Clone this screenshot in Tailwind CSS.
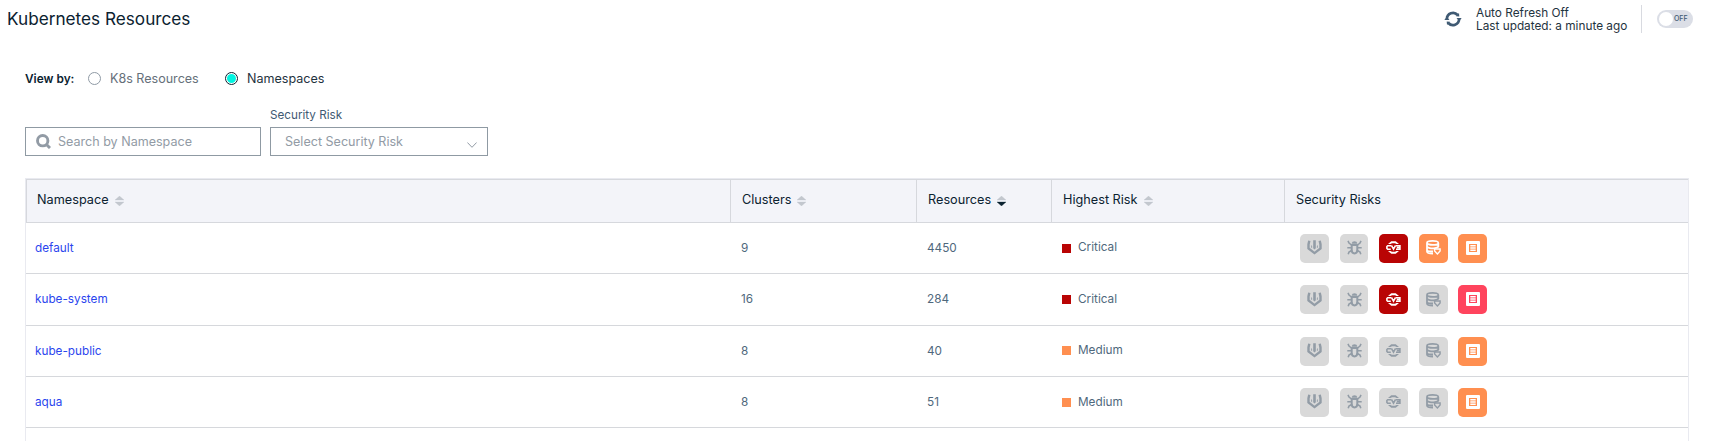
<!DOCTYPE html>
<html lang="en">
<head>
<meta charset="utf-8">
<title>Kubernetes Resources</title>
<script src="https://cdn.jsdelivr.net/npm/@tailwindcss/browser@4"></script>
</head>
<body class="h-[441px] overflow-hidden bg-white font-['Inter',sans-serif] text-[#0b2230]">
<svg class="hidden">
  <symbol id="malware" viewBox="0 0 15 15"><path d="M2.300.800L1.500 4.500v4l6 4.600 6-4.600v-4L12.700.800" fill="none" stroke="currentColor" stroke-width="2.400"/><path d="M6.200.3h2.600v8L7.500 9.500 6.200 8.300zM4.200 5l.9 1v2.200l-.9-.7zM10.800 5l-.9 1v2.200l.9-.7z" fill="currentColor"/></symbol>
  <symbol id="bug" viewBox="0 0 15 15"><path d="M4.700 3.700C4.700.4 10.300.4 10.300 3.700z" fill="currentColor"/><path d="M4.700 5h5.600v4.800c0 4.800-5.600 4.800-5.600 0z" fill="none" stroke="currentColor" stroke-width="2"/><path d="M1 .8l1 2.200 2.500 2M14 .8l-1 2.200-2.500 2M.3 7.700h4M14.700 7.700h-4M1.200 14.200l.8-2.200 2.600-1.500M13.800 14.200L13 12l-2.600-1.500" fill="none" stroke="currentColor" stroke-width="1.600"/></symbol>
  <symbol id="cve" viewBox="0 0 15 15"><path d="M2 4l3.300-2.700h4.400L13 4H10.500L9 3.300H6L4.500 4zM2 11l3.300 2.700h4.400L13 11h-2.500l-1.500.7H6L4.500 11z" fill="currentColor"/><path d="M5 5.700H1.700l-.8.800v2l.8.800H4.800M5.400 5.400l2.100 3.700 2.100-3.700M10 5.700h3.900v3.600H10M10.800 7.500h3" fill="none" stroke="currentColor" stroke-width="1.600"/></symbol>
  <symbol id="data" viewBox="0 0 15 15"><path d="M12.300 2.900c0 2.600-11.300 2.600-11.300 0s11.300-2.600 11.300 0zM1 3v8.500c0 1.300 2.500 2.100 6 2.100M12.300 3v4M1 6.300c0 2 5 2.400 8 1.800 2-.3 3.300-.9 3.300-1.800M1 9.700c0 1 2.500 1.800 6 1.800" fill="none" stroke="currentColor" stroke-width="1.800"/><path d="M8.600 9h5.500v2l-2.700 2.900L8.600 11z" fill="none" stroke="currentColor" stroke-width="1.400"/></symbol>
  <symbol id="list" viewBox="0 0 14 14"><path fill-rule="evenodd" fill="currentColor" d="M1 0h12a1 1 0 0 1 1 1v12a1 1 0 0 1-1 1H1a1 1 0 0 1-1-1V1a1 1 0 0 1 1-1zM3 3v8h8V3z"/><path d="M4.300 4.700h5.400M4.300 7h5.400M4.300 9.300h5.400" stroke="currentColor" stroke-width="1.400"/></symbol>
  <symbol id="sort" viewBox="0 0 9 10"><path d="M4.500 0L9 4H0z" fill="#c3c7ce" stroke="#c3c7ce" stroke-width=".3"/><path d="M0 6h9L4.500 10z" fill="currentColor" stroke="currentColor" stroke-width=".3"/></symbol>
</svg>

<header class="flex h-[38px] justify-between pl-[7px] pr-[21px]">
  <h1 class="pt-[8px] text-[17.200px] leading-[21px]">Kubernetes Resources</h1>
  <div class="flex">
    <svg class="mt-[11px] h-4 w-[18px] text-[#3f5a73]" viewBox="0 0 18 16"><path d="M2.900 8.500V8A6.100 6.100 0 0 1 13.600 4M15.100 7.500V8A6.100 6.100 0 0 1 4.400 12" fill="none" stroke="currentColor" stroke-width="2.700"/><path d="M.3 8.900l2.500-3 2.700 3zM12.500 7.100h5.200l-2.500 3zM12 5.300l3.300.2L15 2z" fill="currentColor"/><path d="M6 10.700l-3.300-.2L3 14z" fill="currentColor"/></svg>
    <div class="ml-[14px] w-[165px] pt-[7px] text-[11.800px] leading-[13px] text-[#1f3340]"><p>Auto Refresh Off</p><p>Last updated: a minute ago</p></div>
    <div class="mt-[5px] h-7 w-px bg-[#d8dae0]"></div>
    <div class="ml-[15px] mt-[10px] flex h-[18px] w-9 items-center rounded-full bg-[#dbdee6] pl-[2px]"><span class="size-[14px] rounded-full bg-white"></span><span class="ml-px text-[7px] font-medium text-[#3f5a73]">OFF</span></div>
  </div>
</header>

<div class="ml-[25px] mt-[29px] flex h-[23px] items-center text-[12.550px] leading-[15px]">
  <span class="w-[63px] pt-px text-[11.850px] font-semibold leading-[14px]">View by:</span>
  <span class="size-[13px] rounded-full border border-[#8f9aa5]"></span>
  <span class="ml-[9px] w-[115px] text-[#66707a]">K8s Resources</span>
  <span class="flex size-[13px] items-center justify-center rounded-full border border-[#0b2230]"><span class="size-[9px] rounded-full bg-[#00f5e1]"></span></span>
  <span class="ml-[9px] text-[#1f3340]">Namespaces</span>
</div>

<div class="ml-[25px] mt-4 flex h-[50px] items-end gap-[9px] text-[12.550px] leading-[15px] text-[#929ba5]">
  <div class="flex h-[29px] w-[236px] items-center border border-[#8f9aa3] pl-[10px]">
    <svg class="mb-px size-[15px]" viewBox="0 0 15 15"><circle cx="6.700" cy="6.700" r="5.200" fill="none" stroke="currentColor" stroke-width="2.900"/><path d="M10.200 10.200l3.800 3.800" stroke="currentColor" stroke-width="3"/></svg>
    <span class="ml-[7px]">Search by Namespace</span>
  </div>
  <div>
    <p class="mb-[4px] text-[11.700px] leading-[16px] text-[#3f5a73]">Security Risk</p>
    <div class="flex h-[29px] w-[218px] items-center justify-between border border-[#8f9aa3] pl-[14px] pr-[10px]"><span>Select Security Risk</span><svg class="mt-[7px] h-[6px] w-[10px]" viewBox="0 0 10 6"><path d="M.4.5L5 5.300 9.600.5" fill="none" stroke="currentColor"/></svg></div>
  </div>
</div>

<main class="ml-[25px] mt-[22px] h-[280px] w-[1664px] border border-[#e9eaf0]">
  <div id="head" class="grid h-[44px] grid-cols-[705px_186px_135px_233px_1fr] border-y border-[#d6d8dd] bg-[#f3f4f9] text-[12.700px] leading-[15px]">
    <div class="flex items-center border-x border-[#d6d8dd] pb-[3px] pl-[10px]">Namespace<svg class="ml-[6px] mt-[3px] h-[10px] w-[9px] text-[#c3c7ce]"><use href="#sort"/></svg></div>
    <div class="flex items-center border-r border-[#d6d8dd] pb-[3px] pl-[11px]">Clusters<svg class="ml-[6px] mt-[3px] h-[10px] w-[9px] text-[#c3c7ce]"><use href="#sort"/></svg></div>
    <div class="flex items-center border-r border-[#d6d8dd] pb-[3px] pl-[11px]">Resources<svg class="ml-[6px] mt-[3px] h-[10px] w-[9px] text-[#0b2230]"><use href="#sort"/></svg></div>
    <div class="flex items-center border-r border-[#d6d8dd] pb-[3px] pl-[11px]">Highest Risk<svg class="ml-[6px] mt-[3px] h-[10px] w-[9px] text-[#c3c7ce]"><use href="#sort"/></svg></div>
    <div class="flex items-center pb-[3px] pl-[11px]">Security Risks</div>
  </div>
  <div id="rows" class="text-[11.750px] leading-4 text-[#4f687c]"></div>
</main>

<script>
const off = 'bg-[#d9d9d9] text-[#929ca6]', red = 'bg-[#b90404] text-white', orange = 'bg-[#ff8f50] text-white', pink = 'bg-[#ff445d] text-white';
const rows = [
  ['default', 9, 4450, 'Critical', [off, off, red, orange, orange], 'h-[51px]', 'pb-[2px]', 'pb-0', 'mt-px'],
  ['kube-system', 16, 284, 'Critical', [off, off, red, off, pink], 'h-[52px]', 'pb-px', 'pb-px', 'mt-0'],
  ['kube-public', 8, 40, 'Medium', [off, off, off, off, orange], 'h-[51px]', 'pb-[2px]', 'pb-0', '-mt-px'],
  ['aqua', 8, 51, 'Medium', [off, off, off, off, orange], 'h-[51px]', 'pb-0', 'pb-0', 'mt-px'],
];
const icons = ['malware', 'bug', 'cve', 'data', 'list'];
const widths = ['w-[29px] mr-[11px]', 'w-[28px] mr-[11px]', 'w-[29px] mr-[11px]', 'w-[29px] mr-[10px]', 'w-[29px]'];
document.getElementById('rows').innerHTML = rows.map(([n, c, r, risk, tiles, h, riskPad, pad, mark]) => `
  <div class="grid ${h} grid-cols-[705px_186px_135px_233px_1fr] items-center border-b border-[#d6d8dc]">
    <a class="pl-[9px] text-[#2b45ee] ${pad}">${n}</a>
    <span class="pl-[10px] ${pad}">${c}</span>
    <span class="pl-[10px] ${pad}">${r}</span>
    <span class="flex items-center pl-[10px]"><i class="${mark} size-[9px] ${risk === 'Critical' ? 'bg-[#b90404]' : 'bg-[#ff8f50]'}"></i><span class="ml-[7px] ${riskPad}">${risk}</span></span>
    <span class="flex pl-[15px]">${tiles.map((t, i) => `<b class="flex h-[29px] ${widths[i]} items-center justify-center rounded-[5px] ${t}"><svg class="${i === 4 ? 'size-[14px] ml-px' : 'size-[15px]'} mb-px"><use href="#${icons[i]}"/></svg></b>`).join('')}</span>
  </div>`).join('');
</script>
</body>
</html>
